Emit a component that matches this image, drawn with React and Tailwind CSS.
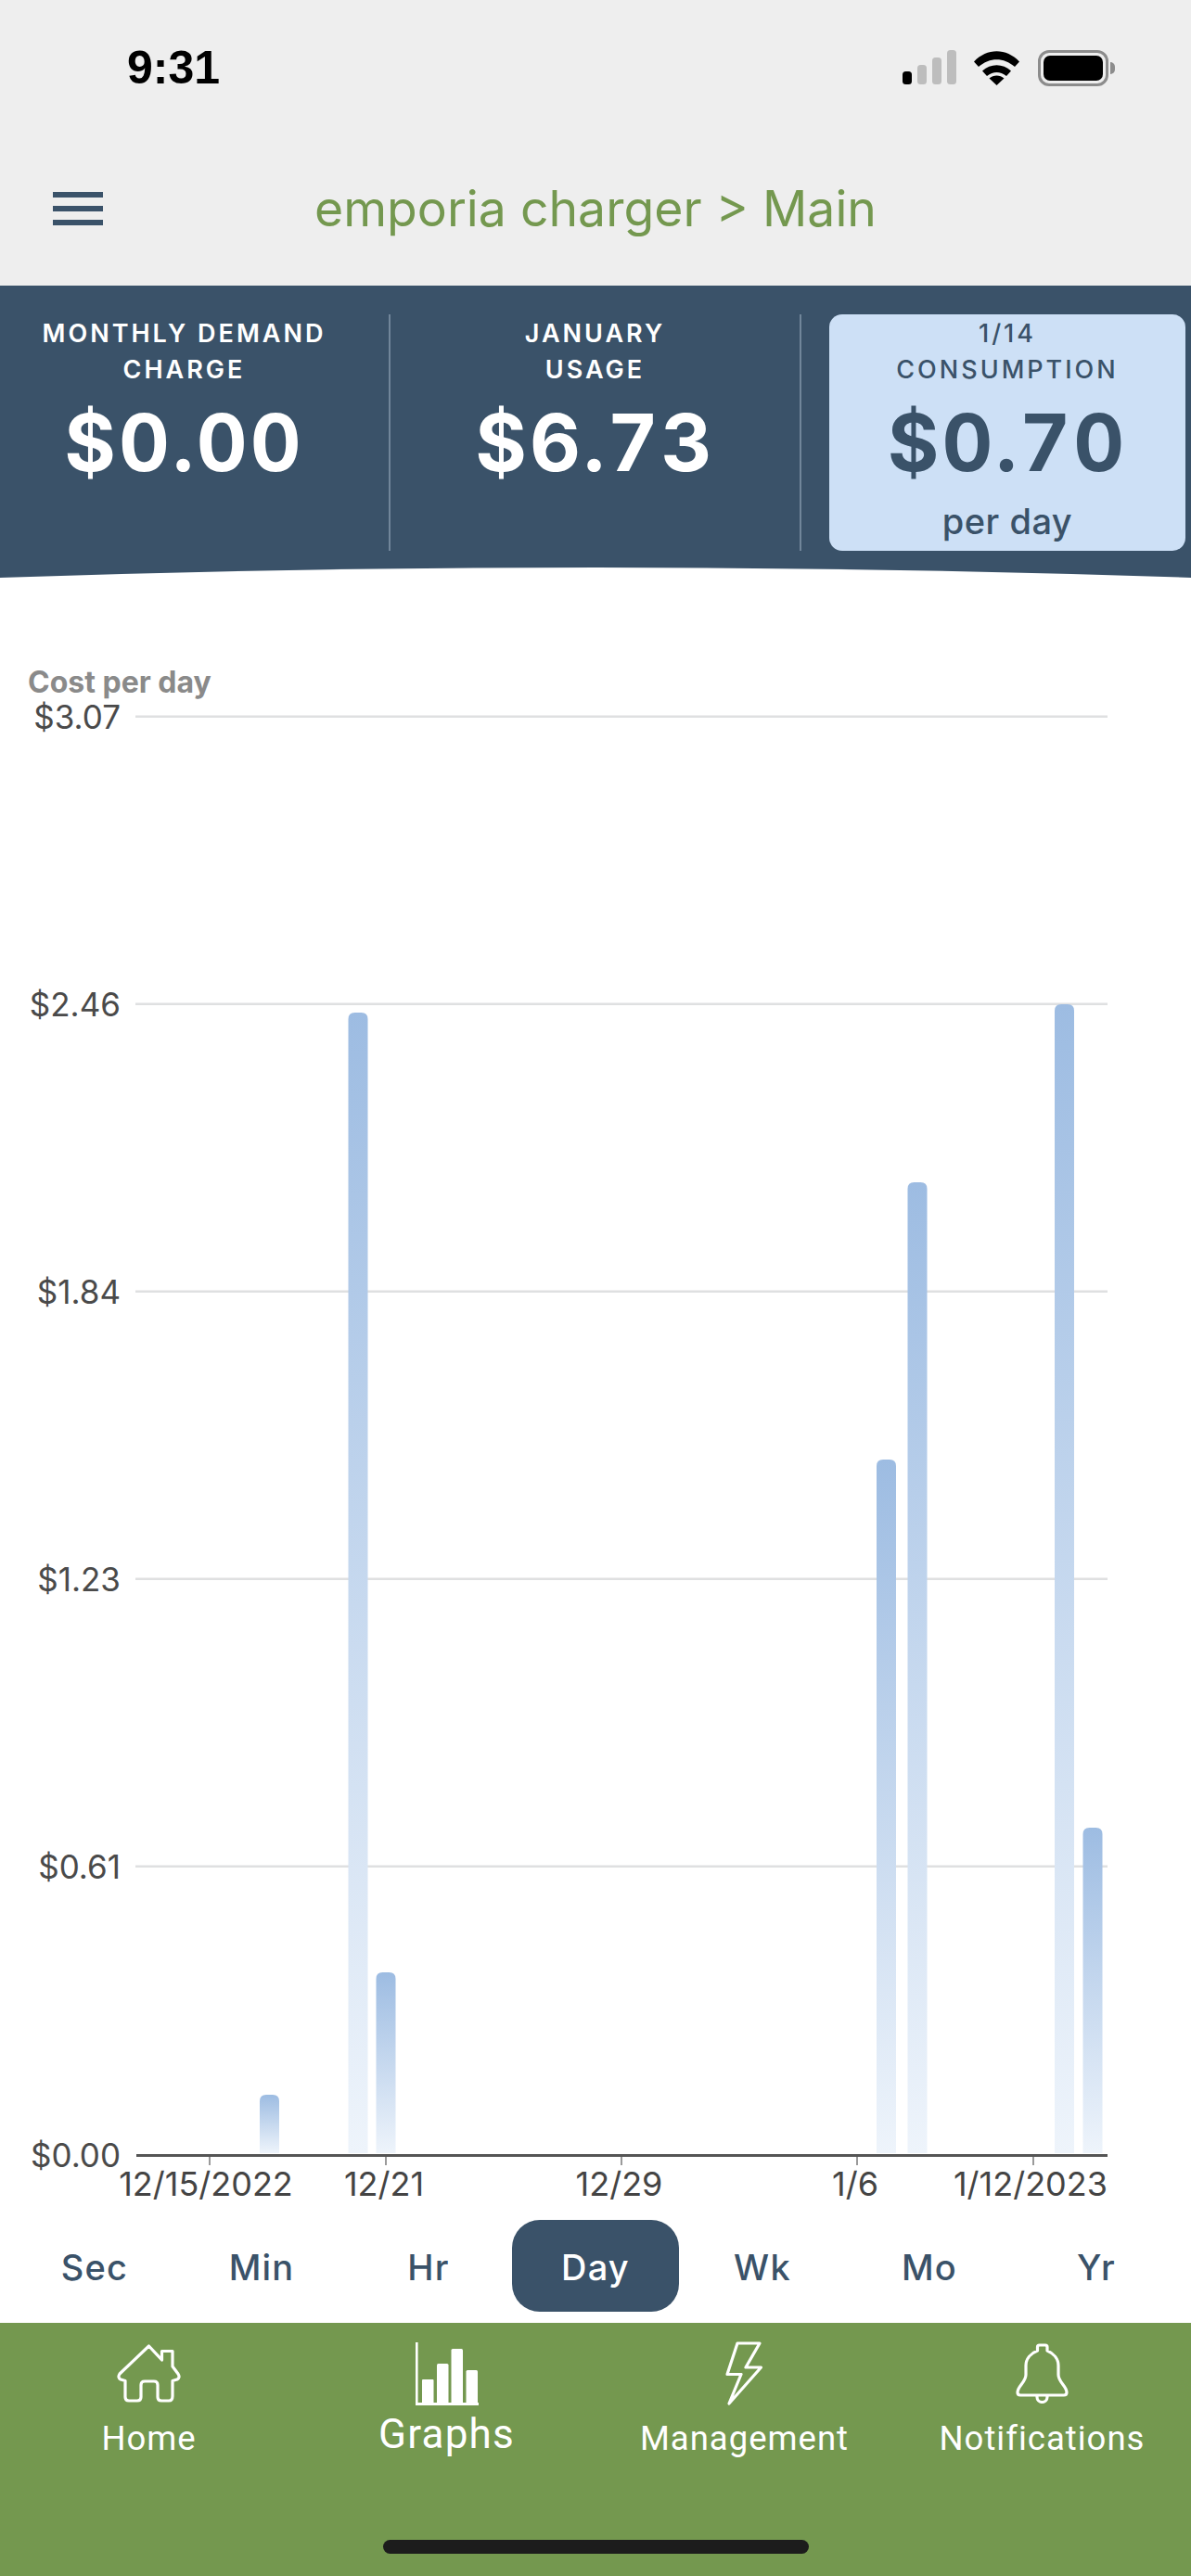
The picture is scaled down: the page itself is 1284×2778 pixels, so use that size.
const labelFont = "[font-family:Inter,sans-serif]";

const grid = [
  { y: 773, label: "$3.07" },
  { y: 1083, label: "$2.46" },
  { y: 1393, label: "$1.84" },
  { y: 1703, label: "$1.23" },
  { y: 2013, label: "$0.61" },
];
const bars = [
  [280, 2259],
  [375.5, 1092],
  [405.5, 2127],
  [945, 1574],
  [978.5, 1275],
  [1137, 1083],
  [1167.5, 1971],
];
const ticks = [226, 416, 670, 924, 1114];
const xLabels = [
  { x: 222, t: "12/15/2022" },
  { x: 414, t: "12/21" },
  { x: 667.5, t: "12/29" },
  { x: 922, t: "1/6" },
  { x: 1111, t: "1/12/2023" },
];

function Chart() {
  return (
    <svg viewBox="0 623 1284 1771" className="block w-[1284px] h-[1771px] [font-family:Inter,sans-serif]">
      <defs>
        {bars.map((b, i) => (
          <linearGradient key={i} id={`bar${i}`} x1="0" y1="0" x2="0" y2="1">
            <stop offset="0%" stopColor="#9dbce2" />
            <stop offset="100%" stopColor="#eef4fb" />
          </linearGradient>
        ))}
      </defs>
      <text x="30" y="747" fontSize="32" fontWeight="700" fill="#8a8a8a">Cost per day</text>
      {grid.map((g) => (
        <g key={g.y}>
          <rect x="146" y={g.y - 1.5} width="1048" height="2.5" fill="#dfe0e1" />
          <text x="130" y={g.y + 12.5} textAnchor="end" fontSize="35" fill="#4a4a4a">{g.label}</text>
        </g>
      ))}
      <text x="130" y="2336.5" textAnchor="end" fontSize="35" fill="#4a4a4a">$0.00</text>
      {bars.map(([x, top], i) => (
        <path
          key={i}
          d={`M${x} ${top + 7} Q${x} ${top} ${x + 7} ${top} H${x + 14} Q${x + 21} ${top} ${x + 21} ${top + 7} V2322 H${x} Z`}
          fill={`url(#bar${i})`}
        />
      ))}
      <rect x="147" y="2323" width="1047" height="3" fill="#555555" />
      {ticks.map((x) => (
        <rect key={x} x={x - 1} y="2326" width="2" height="9" fill="#9a9a9a" />
      ))}
      {xLabels.map((l) => (
        <text key={l.t} x={l.x} y="2368" textAnchor="middle" fontSize="36" fill="#444444">{l.t}</text>
      ))}
    </svg>
  );
}

function Stat({ line1, line2, value, card }) {
  const tone = card ? "text-[#3a5269]" : "text-white";
  return (
    <div className={`flex flex-col items-center ${tone}`}>
      <div className={`text-[27px] leading-[39px] tracking-[3px] text-center mt-[1px] ${card ? "font-medium" : "font-semibold"}`}>
        <div>{line1}</div>
        <div>{line2}</div>
      </div>
      <div className="text-[85px] leading-[90px] font-bold tracking-[3px] tabular-nums mt-[15px]">{value}</div>
    </div>
  );
}

function StatusIcons() {
  return (
    <div className="flex items-center h-[40px]">
      <svg width="60" height="38" viewBox="0 0 60 38" className="block">
        <rect x="2" y="23" width="10" height="14" rx="3.5" fill="#000" />
        <rect x="18" y="16" width="10" height="21" rx="3.5" fill="#bdbdbd" />
        <rect x="34" y="8" width="10" height="29" rx="3.5" fill="#bdbdbd" />
        <rect x="50" y="0" width="10" height="37" rx="3.5" fill="#bdbdbd" />
      </svg>
      <svg width="49" height="37" viewBox="0 0 49 37" className="block ml-[19px]">
        <path d="M0 11.5 C14 -3.5 35 -3.5 49 11.5 L44 17 C32 6.5 17 6.5 5 17 Z" fill="#000" />
        <path d="M9 21.5 C18 13 31 13 40 21.5 L35 27 C28 21.5 21 21.5 14 27 Z" fill="#000" />
        <path d="M16.5 29.5 C21 25.5 28 25.5 32.5 29.5 L24.5 37 Z" fill="#000" />
      </svg>
      <div className="ml-[20px] flex items-center">
        <div className="w-[76px] h-[39px] rounded-[12px] border-[3px] border-[#8c8c8c] p-[3px]">
          <div className="w-full h-full rounded-[7px] bg-black" />
        </div>
        <div className="w-[5px] h-[13px] ml-[2px] rounded-r-full bg-[#8c8c8c]" />
      </div>
    </div>
  );
}

function Tab({ t, active }) {
  return (
    <div className={`h-[99px] pt-[3px] flex items-center justify-center text-[38px] tracking-[1.2px] font-medium ${active ? "bg-[#3a5269] text-white rounded-[30px]" : "text-[#3a5269]"}`}>
      {t}
    </div>
  );
}

function NavItem({ icon, label, big }) {
  return (
    <div className="flex flex-col items-center">
      <div className="h-[72px] pt-[20px] box-content flex items-start justify-center">{icon}</div>
      <div className={`${big ? "text-[44px] leading-[48px] mt-[4px] tracking-[1.2px]" : "text-[36.5px] leading-[42px] mt-[12px] tracking-[1px]"} text-white [font-family:Roboto,sans-serif]`}>
        {label}
      </div>
    </div>
  );
}

const HomeIcon = (
  <svg width="69" height="64" viewBox="0 0 69 64" className="block mt-[3px]" fill="none" stroke="#fff" strokeWidth="3.2" strokeLinejoin="round">
    <path d="M34.5 2 L48.5 17 V7.5 H60 V24 L66 32 Q68.5 36 65 38 L60 39.5 V56 Q60 61 56 61 H48 Q44 61 44 57 V44 Q44 40 40 40 H30 Q26 40 26 44 V57 Q26 61 22 61 H13 Q9 61 9 57 V39.5 L4 38 Q0.5 36 3 32 Z" />
  </svg>
);
const GraphIcon = (
  <svg width="69" height="68" viewBox="0 0 69 68" className="block mt-[1px]" fill="#fff">
    <rect x="1" y="0" width="2.6" height="68" />
    <rect x="1" y="65" width="68" height="3" />
    <rect x="8" y="40" width="12.5" height="26" rx="1" />
    <rect x="24" y="23" width="12.5" height="43" rx="1.5" />
    <rect x="39.5" y="7" width="12.5" height="59" rx="1.5" />
    <rect x="55.5" y="30" width="12.5" height="36" rx="1.5" />
  </svg>
);
const BoltIcon = (
  <svg width="41" height="70" viewBox="0 0 41 70" className="block" fill="none" stroke="#fff" strokeWidth="3.2" strokeLinejoin="round">
    <polygon points="13,2 37,2 22,28 38.5,28 4,67 17,35.5 2,35.5" />
  </svg>
);
const BellIcon = (
  <svg width="57" height="65" viewBox="0 0 57 65" className="block mt-[2px]" fill="none" stroke="#fff" strokeWidth="3.2" strokeLinejoin="round">
    <path d="M23.5 4 Q23.5 2 25.5 2 H32 Q34 2 34 4 V8 C41 11 46 17 46 24 V34 C46 42 55 46 55 53 Q55 56 52 56 H5 Q2 56 2 53 C2 46 11 42 11 34 V24 C11 17 16 11 23.5 8 Z M23 56 V58 A5.5 5.5 0 0 0 34 58 V56" />
  </svg>
);

export default function App() {
  return (
    <div className={`w-[1284px] h-[2778px] flex flex-col bg-white overflow-hidden ${labelFont}`}>
      <header className="h-[308px] bg-[#eeeeee] flex flex-col">
        <div className="flex items-center justify-between pt-[53px] pl-[137px] pr-[82px] h-[93px]">
          <div className="text-[50px] leading-[40px] font-bold text-black [font-family:'Liberation_Sans',sans-serif]">9:31</div>
          <StatusIcons />
        </div>
        <div className="grid grid-cols-[1fr_auto_1fr] items-center mt-[102px] px-[57px]">
          <div className="w-[54px] h-[36px] flex flex-col justify-between">
            <div className="h-[6px] bg-[#3a5269]" />
            <div className="h-[6px] bg-[#3a5269]" />
            <div className="h-[6px] bg-[#3a5269]" />
          </div>
          <div className="text-[53.5px] leading-[60px] text-[#74984f]">emporia charger &gt; Main</div>
          <div />
        </div>
      </header>

      <section className="bg-[#3a5269]">
        <div className="grid grid-cols-[421px_443px_420px] h-[286px] pt-[31px] box-content">
          <div className="border-r-2 border-[#71869a] pr-[22px] h-[255px]">
            <Stat line1="MONTHLY DEMAND" line2="CHARGE" value="$0.00" />
          </div>
          <div className="h-[255px] border-r-2 border-[#71869a]">
            <Stat line1="JANUARY" line2="USAGE" value="$6.73" />
          </div>
          <div className="pl-[30px] pr-[6px]">
            <div className="h-[255px] bg-[#cde0f6] rounded-[14px] flex flex-col items-center">
              <Stat line1="1/14" line2="CONSUMPTION" value="$0.70" card />
              <div className="text-[38px] leading-[44px] font-medium tracking-[0.5px] text-[#3a5269] mt-[17px]">per day</div>
            </div>
          </div>
        </div>
        <svg viewBox="0 0 1284 11" className="block w-[1284px] h-[11px] mt-[-13px]">
          <path d="M0 11 Q642 -11 1284 11 Z" fill="#ffffff" />
        </svg>
      </section>

      <Chart />

      <div className="grid grid-cols-7 px-[12px]">
        {["Sec", "Min", "Hr", "Day", "Wk", "Mo", "Yr"].map((t) => (
          <Tab key={t} t={t} active={t === "Day"} />
        ))}
      </div>

      <footer className="mt-[12px] flex-1 bg-[#74984f] flex flex-col">
        <div className="grid grid-cols-4 h-[234px]">
          <NavItem icon={HomeIcon} label="Home" />
          <NavItem icon={GraphIcon} label="Graphs" big />
          <NavItem icon={BoltIcon} label="Management" />
          <NavItem icon={BellIcon} label="Notifications" />
        </div>
        <div className="w-[459px] h-[15px] rounded-full bg-[#1c1c1c] mx-auto" />
      </footer>
    </div>
  );
}
